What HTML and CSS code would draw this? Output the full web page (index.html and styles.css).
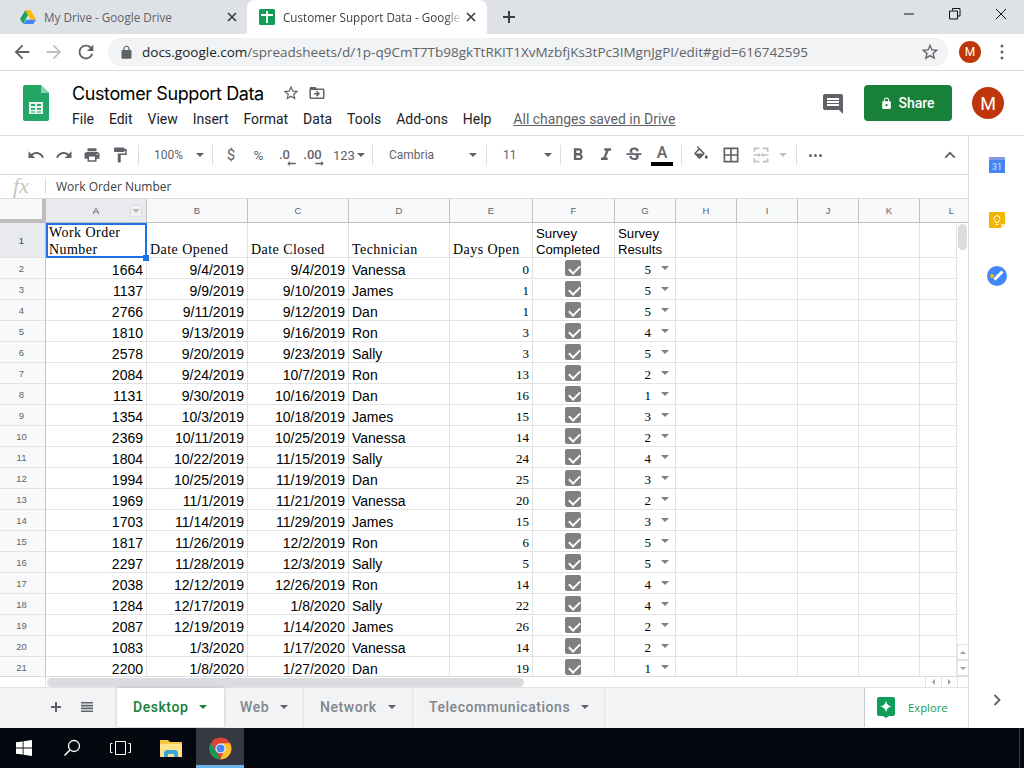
FILE: index.html
```html
<!DOCTYPE html>
<html lang="en">
<head>
<meta charset="utf-8">
<title>Customer Support Data</title>
<link rel="stylesheet" href="styles.css">
</head>
<body>
<div class="tabstrip">
  <div class="tab">
    <svg class="favicon" viewBox="0 0 24 24"><path fill="#fbbc04" d="M8 2h8l8 14h-8z"/><path fill="#1ea362" d="M8 2l4 7-7.500 13L0 15z"/><path fill="#4285f4" d="M9 16h15l-4 6.500H4.800z"/></svg>
    <span class="tab-title">My Drive - Google Drive</span>
    <svg class="tab-x" viewBox="0 0 10 10"><path d="M1 1l8 8M9 1L1 9" stroke="#3c4043" stroke-width="1.700" fill="none"/></svg>
  </div>
  <div class="tab active">
    <svg class="favicon" viewBox="0 0 16 16"><rect width="16" height="16" rx="1.500" fill="#0f9d58"/><path fill="#fff" d="M7 2h2v3h5v2H9v7H7V7H2V5h5z"/></svg>
    <span class="tab-title">Customer Support Data - Google</span>
    <svg class="tab-x" viewBox="0 0 10 10"><path d="M1 1l8 8M9 1L1 9" stroke="#3c4043" stroke-width="1.700" fill="none"/></svg>
  </div>
  <svg class="newtab" viewBox="0 0 14 14"><path d="M6 1h2v5h5v2H8v5H6V8H1V6h5z" fill="#3c4043"/></svg>
  <div class="winctl">
    <svg viewBox="0 0 12 12" width="12" height="12"><path d="M1 6h10" stroke="#111" fill="none"/></svg>
    <svg viewBox="0 0 12 12" width="12" height="12"><path d="M3.500 2.500V.5h7.500v7.500H9M.5 3h8v8h-8z" stroke="#111" fill="none"/></svg>
    <svg viewBox="0 0 12 12" width="12" height="12"><path d="M1 1l10 10M11 1L1 11" stroke="#111" fill="none"/></svg>
  </div>
</div>
<div class="addrbar">
  <svg class="nav" viewBox="0 0 24 24"><path fill="#5f6368" d="M20 11H7.830l5.590-5.590L12 4l-8 8 8 8 1.410-1.410L7.830 13H20v-2z"/></svg>
  <svg class="nav" viewBox="0 0 24 24"><path fill="#bdc1c6" d="M12 4l-1.410 1.410L16.170 11H4v2h12.170l-5.580 5.590L12 20l8-8z"/></svg>
  <svg class="nav" viewBox="0 0 24 24"><path fill="#5f6368" d="M17.650 6.350C16.200 4.900 14.210 4 12 4c-4.420 0-7.990 3.580-7.990 8s3.570 8 7.990 8c3.730 0 6.840-2.550 7.730-6h-2.080c-.82 2.330-3.040 4-5.650 4-3.310 0-6-2.690-6-6s2.690-6 6-6c1.660 0 3.140.69 4.220 1.780L13 11h7V4l-2.350 2.350z"/></svg>
  <div class="omnibox">
    <svg class="omni-lock" viewBox="0 0 24 24"><path fill="#5f6368" d="M18 8h-1V6c0-2.760-2.240-5-5-5S7 3.240 7 6v2H6c-1.100 0-2 .9-2 2v10c0 1.100.9 2 2 2h12c1.100 0 2-.9 2-2V10c0-1.100-.9-2-2-2zM15.100 8H8.900V6c0-1.710 1.390-3.100 3.100-3.100 1.710 0 3.100 1.390 3.100 3.100v2z"/></svg>
    <span class="url"><b>docs.google.com</b>/spreadsheets/d/1p-q9CmT7Tb98gkTtRKIT1XvMzbfjKs3tPc3IMgnJgPI/edit#gid=616742595</span>
    <svg class="omni-star" viewBox="0 0 24 24"><path fill="#5f6368" d="M22 9.240l-7.190-.62L12 2 9.190 8.630 2 9.240l5.460 4.730L5.820 21 12 17.270 18.180 21l-1.630-7.030L22 9.240zM12 15.400l-3.760 2.270 1-4.280-3.320-2.880 4.380-.38L12 6.100l1.710 4.040 4.380.38-3.320 2.880 1 4.280L12 15.400z"/></svg>
  </div>
  <div class="avatar small">M</div>
  <svg class="kebab" viewBox="0 0 4 16"><circle cx="2" cy="2" r="1.500"/><circle cx="2" cy="8" r="1.500"/><circle cx="2" cy="14" r="1.500"/></svg>
</div>
<div class="dochead">
  <svg class="sheets-logo" viewBox="0 0 26 36"><path fill="#23a566" d="M2 0h16l8 8v26a2 2 0 0 1-2 2H2a2 2 0 0 1-2-2V2a2 2 0 0 1 2-2z"/><path fill="#8ed1b1" d="M18 0l8 8h-8z"/><path fill="#e8f5ee" d="M6 17h14v12H6zm2 2v2h4v-2zm6 0v2h4v-2zm-6 4v1.800h4V23zm6 0v1.800h4V23zm-6 3.500v1h4v-1zm6 0v1h4v-1z" fill-rule="evenodd"/></svg>
  <div class="titles">
    <div class="title-row">
      <span class="doc-title">Customer Support Data</span>
      <svg class="star" viewBox="0 0 24 24"><path fill="#5f6368" d="M22 9.240l-7.190-.62L12 2 9.190 8.630 2 9.240l5.460 4.730L5.820 21 12 17.270 18.180 21l-1.630-7.030L22 9.240zM12 15.400l-3.760 2.270 1-4.280-3.320-2.880 4.380-.38L12 6.100l1.710 4.040 4.380.38-3.320 2.880 1 4.280L12 15.400z"/></svg>
      <svg class="move" viewBox="0 0 24 24"><path fill="#5f6368" d="M20 6h-8l-2-2H4c-1.100 0-2 .9-2 2v12c0 1.100.9 2 2 2h16c1.100 0 2-.9 2-2V8c0-1.100-.9-2-2-2zm0 12H4V8h16v10zm-8.010-9l-1.410 1.410L12.160 12H8v2h4.160l-1.590 1.590L11.990 17 16 13.010 11.990 9z"/></svg>
    </div>
    <div class="menu">
      <span>File</span><span>Edit</span><span>View</span><span>Insert</span><span>Format</span><span>Data</span><span>Tools</span><span>Add-ons</span><span>Help</span><a class="saved">All changes saved in Drive</a>
    </div>
  </div>
  <svg class="comment" viewBox="2 2 20 20"><path fill="#5f6368" d="M21.990 4c0-1.100-.89-2-1.990-2H4c-1.100 0-2 .9-2 2v12c0 1.100.9 2 2 2h14l4 4-.01-18zM18 14H6v-2h12v2zm0-3H6V9h12v2zm0-3H6V6h12v2z"/></svg>
  <div class="share">
    <svg viewBox="0 0 24 24"><path fill="#fff" d="M18 8h-1V6c0-2.760-2.240-5-5-5S7 3.240 7 6v2H6c-1.100 0-2 .9-2 2v10c0 1.100.9 2 2 2h12c1.100 0 2-.9 2-2V10c0-1.100-.9-2-2-2zm-6 9c-1.100 0-2-.9-2-2s.9-2 2-2 2 .9 2 2-.9 2-2 2zm3.100-9H8.900V6c0-1.710 1.390-3.100 3.100-3.100 1.710 0 3.100 1.390 3.100 3.100v2z"/></svg>
    <span>Share</span>
  </div>
  <div class="avatar big">M</div>
</div>
<div class="workspace">
  <div class="mainpane">
    <div class="toolbar">
      <div class="b"><svg viewBox="0 0 24 24"><path d="M12.500 8c-2.650 0-5.050.99-6.900 2.600L2 7v9h9l-3.620-3.620c1.390-1.160 3.160-1.880 5.120-1.880 3.540 0 6.550 2.310 7.600 5.500l2.370-.78C21.080 11.030 17.150 8 12.500 8z"/></svg></div>
      <div class="b"><svg viewBox="0 0 24 24"><path d="M18.400 10.600C16.550 8.990 14.150 8 11.500 8c-4.650 0-8.580 3.030-9.960 7.220L3.900 16c1.050-3.190 4.050-5.500 7.600-5.500 1.950 0 3.730.72 5.120 1.880L13 16h9V7l-3.600 3.600z"/></svg></div>
      <div class="b"><svg viewBox="0 0 24 24"><path d="M19 8H5c-1.660 0-3 1.340-3 3v6h4v4h12v-4h4v-6c0-1.660-1.340-3-3-3zm-3 11H8v-5h8v5zm3-7c-.55 0-1-.45-1-1s.45-1 1-1 1 .45 1 1-.45 1-1 1zm-1-9H6v4h12V3z"/></svg></div>
      <div class="b"><svg viewBox="0 0 24 24"><path d="M18 4V3c0-.55-.45-1-1-1H5c-.55 0-1 .45-1 1v4c0 .55.45 1 1 1h12c.55 0 1-.45 1-1V6h1v4H9v11c0 .55.45 1 1 1h2c.55 0 1-.45 1-1v-9h8V4h-3z"/></svg></div>
      <div class="sep s-a"></div>
      <div class="sel w-zoom"><span>100%</span><i class="caret"></i></div>
      <div class="sep"></div>
      <div class="b t t-money">$</div>
      <div class="b t t-pct">%</div>
      <div class="b dec"><span>.0</span><svg viewBox="0 0 10 6"><path d="M0 3l3-3v2h7v2H3v2z"/></svg></div>
      <div class="b dec"><span>.00</span><svg viewBox="0 0 10 6"><path d="M10 3L7 0v2H0v2h7v2z"/></svg></div>
      <div class="sel w-num"><span>123</span><i class="caret"></i></div>
      <div class="sep"></div>
      <div class="sel w-font"><span>Cambria</span><i class="caret"></i></div>
      <div class="sep"></div>
      <div class="sel w-size"><span>11</span><i class="caret"></i></div>
      <div class="sep s-b"></div>
      <div class="b big"><svg viewBox="0 0 24 24"><path d="M15.600 10.790c.97-.67 1.650-1.770 1.650-2.790 0-2.260-1.750-4-4-4H7v14h7.040c2.090 0 3.710-1.700 3.710-3.790 0-1.520-.86-2.820-2.150-3.420zM10 6.500h3c.83 0 1.500.67 1.500 1.500s-.67 1.500-1.500 1.500h-3v-3zm3.500 9H10v-3h3.500c.83 0 1.500.67 1.500 1.500s-.67 1.500-1.500 1.500z"/></svg></div>
      <div class="b big"><svg viewBox="0 0 24 24"><path d="M10 4v3h2.210l-3.420 8H6v3h8v-3h-2.210l3.420-8H18V4z"/></svg></div>
      <div class="b big"><svg viewBox="0 0 24 24"><path d="M6.850 7.080C6.850 4.370 9.450 3 12.240 3c1.640 0 3 .49 3.900 1.280.77.65 1.460 1.730 1.460 3.240h-3.010c0-.31-.05-.59-.15-.85-.29-.86-1.200-1.280-2.350-1.280-2.040 0-2.400 1.420-2.400 2.050 0 .74.41 1.350 1.210 1.870H6.850V7.080zM21 12v-2H3v2h9.620c1.150.45 1.960.75 1.960 1.970 0 1-.81 1.670-2.280 1.670-1.540 0-2.930-.54-2.930-2.510H6.400c0 .55.08 1.130.24 1.580.81 2.290 3.290 3.300 5.670 3.300 2.270 0 5.300-.89 5.300-4.050 0-.3-.01-1.160-.48-1.940H21V12z"/></svg></div>
      <div class="b color"><span>A</span><i></i></div>
      <div class="sep s-c"></div>
      <div class="b"><svg viewBox="0 0 24 24"><path d="M16.560 8.940L7.620 0 6.210 1.410l2.380 2.380-5.150 5.150c-.59.59-.59 1.540 0 2.120l5.500 5.500c.29.29.68.44 1.060.44s.77-.15 1.060-.44l5.500-5.500c.59-.58.59-1.530 0-2.120zM5.210 10L10 5.210 14.790 10H5.210zM19 11.500s-2 2.170-2 3.500c0 1.100.9 2 2 2s2-.9 2-2c0-1.330-2-3.500-2-3.500z"/></svg></div>
      <div class="b gap2 big"><svg viewBox="0 0 24 24"><path d="M3 3v18h18V3H3zm8 16H5v-6h6v6zm0-8H5V5h6v6zm8 8h-6v-6h6v6zm0-8h-6V5h6v6z"/></svg></div>
      <div class="b gap2 dim big"><svg viewBox="0 0 24 24"><path d="M3 3h7v2H5v3H3zm11 0h7v5h-2V5h-5zM3 16h2v3h5v2H3zm16 0h2v5h-7v-2h5zM3 11h6V9l3 3-3 3v-2H3zm18 0h-6V9l-3 3 3 3v-2h6z"/></svg></div>
      <i class="caret dimc"></i>
      <div class="sep s-d"></div>
      <div class="b more"><i></i><i></i><i></i></div>
      <svg class="collapse" viewBox="0 0 14 9"><path d="M1.500 7.500L7 2l5.500 5.500" fill="none" stroke="#5f6368" stroke-width="2.200"/></svg>
    </div>
    <div class="formula">
      <span class="fx">fx</span>
      <span class="fdiv"></span>
      <span class="ftext">Work Order Number</span>
    </div>
    <div class="gridwrap">
      <div class="grid">
        <div class="corner"></div>
        <div class="ch on">A<i class="filter"></i></div><div class="ch">B</div><div class="ch">C</div><div class="ch">D</div><div class="ch">E</div><div class="ch">F</div><div class="ch">G</div><div class="ch">H</div><div class="ch">I</div><div class="ch">J</div><div class="ch">K</div><div class="ch ch-l">L</div><div class="chend"></div>

        <div class="rh on">1</div>
        <div class="c hd sel-cell">Work Order Number<i class="handle"></i></div><div class="c hd">Date Opened</div><div class="c hd">Date Closed</div><div class="c hd">Technician</div><div class="c hd">Days Open</div><div class="c hs">Survey Completed</div><div class="c hs">Survey Results</div><div class="c"></div><div class="c"></div><div class="c"></div><div class="c"></div><div class="c"></div><div class="vs"></div>

        <div class="rh">2</div><div class="c r">1664</div><div class="c r">9/4/2019</div><div class="c r">9/4/2019</div><div class="c">Vanessa</div><div class="c r s">0</div><div class="c m"><i class="ck"></i></div><div class="c g">5<i class="dd"></i></div><div class="c"></div><div class="c"></div><div class="c"></div><div class="c"></div><div class="c"></div><div class="vs"></div>
        <div class="rh">3</div><div class="c r">1137</div><div class="c r">9/9/2019</div><div class="c r">9/10/2019</div><div class="c">James</div><div class="c r s">1</div><div class="c m"><i class="ck"></i></div><div class="c g">5<i class="dd"></i></div><div class="c"></div><div class="c"></div><div class="c"></div><div class="c"></div><div class="c"></div><div class="vs"></div>
        <div class="rh">4</div><div class="c r">2766</div><div class="c r">9/11/2019</div><div class="c r">9/12/2019</div><div class="c">Dan</div><div class="c r s">1</div><div class="c m"><i class="ck"></i></div><div class="c g">5<i class="dd"></i></div><div class="c"></div><div class="c"></div><div class="c"></div><div class="c"></div><div class="c"></div><div class="vs"></div>
        <div class="rh">5</div><div class="c r">1810</div><div class="c r">9/13/2019</div><div class="c r">9/16/2019</div><div class="c">Ron</div><div class="c r s">3</div><div class="c m"><i class="ck"></i></div><div class="c g">4<i class="dd"></i></div><div class="c"></div><div class="c"></div><div class="c"></div><div class="c"></div><div class="c"></div><div class="vs"></div>
        <div class="rh">6</div><div class="c r">2578</div><div class="c r">9/20/2019</div><div class="c r">9/23/2019</div><div class="c">Sally</div><div class="c r s">3</div><div class="c m"><i class="ck"></i></div><div class="c g">5<i class="dd"></i></div><div class="c"></div><div class="c"></div><div class="c"></div><div class="c"></div><div class="c"></div><div class="vs"></div>
        <div class="rh">7</div><div class="c r">2084</div><div class="c r">9/24/2019</div><div class="c r">10/7/2019</div><div class="c">Ron</div><div class="c r s">13</div><div class="c m"><i class="ck"></i></div><div class="c g">2<i class="dd"></i></div><div class="c"></div><div class="c"></div><div class="c"></div><div class="c"></div><div class="c"></div><div class="vs"></div>
        <div class="rh">8</div><div class="c r">1131</div><div class="c r">9/30/2019</div><div class="c r">10/16/2019</div><div class="c">Dan</div><div class="c r s">16</div><div class="c m"><i class="ck"></i></div><div class="c g">1<i class="dd"></i></div><div class="c"></div><div class="c"></div><div class="c"></div><div class="c"></div><div class="c"></div><div class="vs"></div>
        <div class="rh">9</div><div class="c r">1354</div><div class="c r">10/3/2019</div><div class="c r">10/18/2019</div><div class="c">James</div><div class="c r s">15</div><div class="c m"><i class="ck"></i></div><div class="c g">3<i class="dd"></i></div><div class="c"></div><div class="c"></div><div class="c"></div><div class="c"></div><div class="c"></div><div class="vs"></div>
        <div class="rh">10</div><div class="c r">2369</div><div class="c r">10/11/2019</div><div class="c r">10/25/2019</div><div class="c">Vanessa</div><div class="c r s">14</div><div class="c m"><i class="ck"></i></div><div class="c g">2<i class="dd"></i></div><div class="c"></div><div class="c"></div><div class="c"></div><div class="c"></div><div class="c"></div><div class="vs"></div>
        <div class="rh">11</div><div class="c r">1804</div><div class="c r">10/22/2019</div><div class="c r">11/15/2019</div><div class="c">Sally</div><div class="c r s">24</div><div class="c m"><i class="ck"></i></div><div class="c g">4<i class="dd"></i></div><div class="c"></div><div class="c"></div><div class="c"></div><div class="c"></div><div class="c"></div><div class="vs"></div>
        <div class="rh">12</div><div class="c r">1994</div><div class="c r">10/25/2019</div><div class="c r">11/19/2019</div><div class="c">Dan</div><div class="c r s">25</div><div class="c m"><i class="ck"></i></div><div class="c g">3<i class="dd"></i></div><div class="c"></div><div class="c"></div><div class="c"></div><div class="c"></div><div class="c"></div><div class="vs"></div>
        <div class="rh">13</div><div class="c r">1969</div><div class="c r">11/1/2019</div><div class="c r">11/21/2019</div><div class="c">Vanessa</div><div class="c r s">20</div><div class="c m"><i class="ck"></i></div><div class="c g">2<i class="dd"></i></div><div class="c"></div><div class="c"></div><div class="c"></div><div class="c"></div><div class="c"></div><div class="vs"></div>
        <div class="rh">14</div><div class="c r">1703</div><div class="c r">11/14/2019</div><div class="c r">11/29/2019</div><div class="c">James</div><div class="c r s">15</div><div class="c m"><i class="ck"></i></div><div class="c g">3<i class="dd"></i></div><div class="c"></div><div class="c"></div><div class="c"></div><div class="c"></div><div class="c"></div><div class="vs"></div>
        <div class="rh">15</div><div class="c r">1817</div><div class="c r">11/26/2019</div><div class="c r">12/2/2019</div><div class="c">Ron</div><div class="c r s">6</div><div class="c m"><i class="ck"></i></div><div class="c g">5<i class="dd"></i></div><div class="c"></div><div class="c"></div><div class="c"></div><div class="c"></div><div class="c"></div><div class="vs"></div>
        <div class="rh">16</div><div class="c r">2297</div><div class="c r">11/28/2019</div><div class="c r">12/3/2019</div><div class="c">Sally</div><div class="c r s">5</div><div class="c m"><i class="ck"></i></div><div class="c g">5<i class="dd"></i></div><div class="c"></div><div class="c"></div><div class="c"></div><div class="c"></div><div class="c"></div><div class="vs"></div>
        <div class="rh">17</div><div class="c r">2038</div><div class="c r">12/12/2019</div><div class="c r">12/26/2019</div><div class="c">Ron</div><div class="c r s">14</div><div class="c m"><i class="ck"></i></div><div class="c g">4<i class="dd"></i></div><div class="c"></div><div class="c"></div><div class="c"></div><div class="c"></div><div class="c"></div><div class="vs"></div>
        <div class="rh">18</div><div class="c r">1284</div><div class="c r">12/17/2019</div><div class="c r">1/8/2020</div><div class="c">Sally</div><div class="c r s">22</div><div class="c m"><i class="ck"></i></div><div class="c g">4<i class="dd"></i></div><div class="c"></div><div class="c"></div><div class="c"></div><div class="c"></div><div class="c"></div><div class="vs"></div>
        <div class="rh">19</div><div class="c r">2087</div><div class="c r">12/19/2019</div><div class="c r">1/14/2020</div><div class="c">James</div><div class="c r s">26</div><div class="c m"><i class="ck"></i></div><div class="c g">2<i class="dd"></i></div><div class="c"></div><div class="c"></div><div class="c"></div><div class="c"></div><div class="c"></div><div class="vs"></div>
        <div class="rh">20</div><div class="c r">1083</div><div class="c r">1/3/2020</div><div class="c r">1/17/2020</div><div class="c">Vanessa</div><div class="c r s">14</div><div class="c m"><i class="ck"></i></div><div class="c g">2<i class="dd"></i></div><div class="c"></div><div class="c"></div><div class="c"></div><div class="c"></div><div class="c"></div><div class="vs"></div>
        <div class="rh">21</div><div class="c r">2200</div><div class="c r">1/8/2020</div><div class="c r">1/27/2020</div><div class="c">Dan</div><div class="c r s">19</div><div class="c m"><i class="ck"></i></div><div class="c g">1<i class="dd"></i></div><div class="c"></div><div class="c"></div><div class="c"></div><div class="c"></div><div class="c"></div><div class="vs"></div>
      </div>
      <div class="vthumb"></div>
      <div class="varrows"><div class="va"><i class="up"></i></div><div class="va"><i class="down"></i></div></div>
    </div>
    <div class="hscroll">
      <div class="hgutter"></div>
      <div class="htrack"><div class="hthumb"></div></div>
      <div class="ha"><i class="left"></i></div>
      <div class="ha"><i class="right"></i></div>
      <div class="hend"></div>
    </div>
    <div class="sheetbar">
      <svg class="add" viewBox="0 0 12 12"><path d="M5 1h2v4h4v2H7v4H5V7H1V5h4z" fill="#5f6368"/></svg>
      <svg class="all" viewBox="0 0 14 12"><path d="M1 1h12v1.600H1zm0 2.800h12v1.600H1zm0 2.800h12v1.600H1zm0 2.800h12V11H1z" fill="#5f6368"/></svg>
      <div class="stab on">Desktop<i class="caret"></i></div>
      <div class="stab w-web">Web<i class="caret"></i></div>
      <div class="stab w-net">Network<i class="caret"></i></div>
      <div class="stab w-tel">Telecommunications<i class="caret"></i></div>
      <div class="explore">
        <svg viewBox="0 0 18 21"><path fill="#0f9d58" d="M2 0h14a2 2 0 0 1 2 2v15a2 2 0 0 1-2 2h-4l-3 2-3-2H2a2 2 0 0 1-2-2V2a2 2 0 0 1 2-2z"/><path fill="#fff" d="M9 3.500c.5 3.500 2 5 5.500 6-3.500 1-5 2.500-5.500 6-.5-3.500-2-5-5.500-6 3.500-1 5-2.500 5.500-6z"/></svg>
        <span>Explore</span>
      </div>
    </div>
  </div>
  <div class="sidepanel">
    <svg class="app cal" viewBox="0 0 16 16"><path fill="#4285f4" d="M0 3h16v13H0z"/><path fill="#2a56c6" d="M0 0h16v3H0z" opacity=".6"/><text x="8" y="12.500" font-size="9" text-anchor="middle" fill="#cfe0fc" font-family="Roboto, sans-serif">31</text></svg>
    <svg class="app keep" viewBox="0 0 16 16"><path fill="#f4b400" d="M1 0h14a1 1 0 0 1 1 1v11l-4 4H1a1 1 0 0 1-1-1V1a1 1 0 0 1 1-1z"/><path fill="#fbe6a2" d="M16 12l-4 4v-4z"/><path fill="none" stroke="#fff" d="M6.500 10.500V9.200C5.500 8.600 5 7.700 5 6.700a3 3 0 0 1 6 0c0 1-.5 1.900-1.500 2.500v1.300zM6.500 12.500h3"/></svg>
    <svg class="app tasks" viewBox="0 0 20 20"><circle cx="10" cy="10" r="10" fill="#4285f4"/><path d="M7.500 13.500l8-8" stroke="#fff" stroke-width="3" fill="none"/><circle cx="5" cy="10" r="2" fill="#fbbc04"/></svg>
    <svg class="sidechev" viewBox="0 0 8 12"><path d="M1.500 1l5 5-5 5" fill="none" stroke="#5f6368" stroke-width="1.800"/></svg>
  </div>
</div>
<div class="taskbar">
  <svg class="win" viewBox="0 0 16 16"><path fill="#fff" d="M0 2.300l6.700-.9v6.200H0zM7.500 1.300L16 0v7.600H7.500zM0 8.400h6.700v6.200L0 13.700zM7.500 8.400H16V16l-8.500-1.200z"/></svg>
  <svg class="search" viewBox="0 0 18 18"><circle cx="11" cy="7" r="5.500" fill="none" stroke="#fff" stroke-width="1.300"/><path d="M7 11l-5.500 5.500" stroke="#fff" stroke-width="1.600"/></svg>
  <svg class="taskview" viewBox="0 0 21 14"><path fill="none" stroke="#fff" d="M5.500.5h10v13h-10zM2.500 2.500H.5v9h2M18.500 2.500h2v9h-2"/></svg>
  <svg class="folder" viewBox="0 0 22 18"><path fill="#f5c842" d="M0 1h8l2 2h12v15H0z"/><path fill="#ffe48a" d="M0 5h22v13H0z"/><path fill="#3aa6dd" d="M4 18v-5l2-2h10l2 2v5h-4v-3H8v3z"/></svg>
  <div class="chrome-tile">
    <svg viewBox="0 0 24 24"><circle cx="12" cy="12" r="11.500" fill="#db4437"/><path fill="#0f9d58" d="M12 23.500A11.500 11.500 0 0 1 2 6.300l6 10.500 4 6.700z"/><path fill="#fbc02d" d="M12 23.500A11.500 11.500 0 0 0 22 6.500H12l4 6.500z"/><circle cx="12" cy="12" r="5.300" fill="#fff"/><circle cx="12" cy="12" r="4.200" fill="#4285f4"/></svg>
  </div>
  <div class="showdesk"></div>
</div>
</body>
</html>
```
FILE: styles.css
```css
* { box-sizing: border-box; }
html, body { margin: 0; padding: 0; }
body {
  width: 1024px; height: 768px; overflow: hidden;
  display: flex; flex-direction: column;
  font-family: Roboto, "Liberation Sans", sans-serif;
  background: #fff; color: #000;
}
i { display: block; font-style: normal; }
svg { display: block; flex: none; }

/* Browser chrome */
.tabstrip { height: 34px; flex: none; background: #dee1e6; display: flex; align-items: stretch; position: relative; }
.tab { width: 247px; display: flex; align-items: center; padding-left: 20px; font: 11.700px "Open Sans", sans-serif; color: #5f6368; }
.tab.active { width: 240px; background: #fff; border-radius: 8px 8px 0 0; padding-left: 12px; color: #3c4043; }
.favicon { width: 16px; height: 16px; margin-right: 8px; }
.tab-title { flex: 1; overflow: hidden; white-space: nowrap; }
.tab.active .tab-title { -webkit-mask-image: linear-gradient(90deg, #000 90%, transparent 99%); mask-image: linear-gradient(90deg, #000 90%, transparent 99%); }
.tab-x { width: 10px; height: 10px; margin-right: 10px; margin-left: 2px; }
.tab.active .tab-x { margin-right: 11px; }
.newtab { width: 14px; height: 14px; margin: 10px 0 0 15px; }
.winctl { margin-left: auto; display: flex; align-items: center; height: 28px; gap: 34px; padding-right: 17px; }
.addrbar { height: 37px; flex: none; display: flex; align-items: center; border-bottom: 1px solid #dadce0; position: relative; padding-left: 11px; }
.nav { width: 22px; height: 22px; margin-right: 10px; }
.omnibox { width: 840px; height: 28px; margin-left: 1px; background: #f1f3f4; border-radius: 14px; display: flex; align-items: center; padding-left: 11px; }
.omni-lock { width: 15px; height: 15px; }
.url { font: 13.500px "Open Sans", sans-serif; color: #5f6368; margin-left: 8px; white-space: nowrap; }
.url b { font-weight: 400; color: #202124; }
.omni-star { width: 20px; height: 20px; margin-left: auto; margin-right: 8px; }
.avatar { background: #bf360c; color: #fff; border-radius: 50%; display: flex; align-items: center; justify-content: center; flex: none; }
.avatar.small { width: 22px; height: 22px; font: 12px Roboto, sans-serif; margin-left: 11px; }
.kebab { width: 4px; height: 16px; margin-left: 19px; fill: #5f6368; }

/* Doc header */
.dochead { height: 65px; flex: none; display: flex; align-items: flex-start; border-bottom: 1px solid #dadce0; position: relative; padding-left: 23px; }
.sheets-logo { width: 26px; height: 36px; margin-top: 14px; }
.titles { margin-left: 23px; }
.title-row { display: flex; align-items: center; height: 24px; margin-top: 10px; }
.doc-title { font: 18px Inter, Roboto, sans-serif; color: #000; letter-spacing: -.4px; }
.star { width: 18px; height: 18px; margin-left: 18px; }
.move { width: 18px; height: 18px; margin-left: 8px; }
.menu { display: flex; font: 14px Roboto, sans-serif; color: #202124; margin-top: 4px; height: 20px; align-items: center; }
.menu span { margin-right: 14.900px; }
.saved { color: #5f6368; text-decoration: underline; margin-left: 7px; }
.comment { width: 20px; height: 20px; margin: 23px 0 0 auto; }
.share { width: 88px; height: 36px; margin: 14px 0 0 21px; background: #188038; border-radius: 4px; color: #fff; display: flex; align-items: center; justify-content: center; font: 500 14px Roboto, sans-serif; gap: 5px; padding-right: 1px; }
.share svg { width: 13px; height: 13px; }
.avatar.big { width: 32px; height: 32px; margin: 16px 20px 0 20px; font: 18px Roboto, sans-serif; }

/* Workspace */
.workspace { height: 592px; flex: none; display: flex; }
.mainpane { width: 969px; border-right: 1px solid #dadce0; display: flex; flex-direction: column; flex: none; }
.sidepanel { flex: 1; position: relative; display: flex; flex-direction: column; align-items: center; }
.app { width: 16px; height: 16px; }
.cal { margin-top: 21px; }
.keep { margin-top: 39px; }
.tasks { margin-top: 38px; width: 20px; height: 20px; }
.sidechev { width: 8px; height: 12px; margin-top: 408px; }

/* Toolbar */
.toolbar { height: 39px; flex: none; display: flex; align-items: center; padding-left: 22px; border-bottom: 1px solid #dadce0; color: #5f6368; }
.b { width: 28px; height: 28px; display: flex; flex-direction: column; align-items: center; justify-content: center; flex: none; }
.b svg { width: 18px; height: 18px; fill: #5f6368; }
.b.big svg { width: 20px; height: 20px; }
.b.dim svg { fill: #bdc1c6; }
.gap2 { margin-left: 2px; }
.sep { width: 1px; height: 20px; background: #dadce0; flex: none; }
.s-a { margin-left: 4px; }
.s-b { margin-right: 3px; }
.s-c { margin: 0 5px; }
.s-d { margin: 0 4px 0 9px; }
.sel { display: flex; align-items: center; height: 28px; font-size: 12px; position: relative; color: #5f6368; flex: none; }
.sel span { font-size: 12px; }
.caret { width: 0; height: 0; border: 4px solid transparent; border-top: 4.500px solid #5f6368; border-bottom: 0; flex: none; }
.w-zoom { width: 73px; padding-left: 15px; }
.w-zoom .caret { margin-left: 13px; }
.w-num { width: 44px; padding-left: 5px; }
.w-num span { font-size: 13px; }
.w-num .caret { margin-left: 2px; }
.w-font { width: 113px; padding-left: 16px; }
.w-font .caret { margin-left: auto; margin-right: 9px; }
.w-size { width: 73px; padding-left: 16px; }
.w-size .caret { margin-left: auto; margin-right: 8px; }
.t-money { margin-left: 4px; font-size: 15px; }
.t-pct { width: 27px; font-size: 13.500px; }
.dec { font-size: 13px; font-weight: 500; padding-top: 4px; }
.dec span { line-height: 12px; margin-right: 3px; }
.b.dec svg { width: 9px; height: 5px; margin-left: 10px; }
.color span { font-size: 16px; font-weight: 500; line-height: 15px; }
.color i { width: 22px; height: 4px; background: #000; margin-top: 2px; }
.dimc { border-top-color: #bdc1c6; margin-left: 4px; }
.more { flex-direction: row; gap: 2px; }
.more i { width: 3px; height: 3px; border-radius: 50%; background: #5f6368; }
.collapse { width: 12px; height: 8px; margin-left: auto; margin-right: 12px; }

/* Formula */
.formula { height: 24px; flex: none; display: flex; align-items: center; border-bottom: 1px solid #dadce0; padding-bottom: 1px; }
.fx { width: 45px; padding-left: 13px; font: italic 22px "Liberation Serif", serif; color: #c4c4c4; }
.fdiv { width: 1px; height: 16px; background: #dadce0; }
.ftext { margin-left: 10px; font: 12px "Open Sans", Roboto, sans-serif; color: #3c4043; }

/* Grid */
.gridwrap { height: 477px; flex: none; position: relative; overflow: hidden; }
.grid {
  display: grid;
  grid-template-columns: 46px 101px 101px 101px 101px 83px 82px 61px 61px 61px 61px 61px 37px 11px;
  grid-template-rows: 24px 35px repeat(20, 21px);
}
.corner { background: #f8f9fa; border-right: 4px solid #bdbdbd; border-bottom: 4px solid #bdbdbd; }
.ch { background: #f8f9fa; border-right: 1px solid #c0c0c0; border-bottom: 1px solid #c0c0c0; display: flex; align-items: center; justify-content: center; font: 9.500px "Liberation Sans", Arial, sans-serif; color: #5f6368; position: relative; }
.ch.on { background: #e8eaed; color: #444; }
.ch-l { border-right: 0; padding-left: 26px; }
.chend { background: #f8f9fa; border-bottom: 1px solid #c0c0c0; }
.filter { position: absolute; right: 4px; top: 6px; width: 12px; height: 12px; background: #f1f3f4; border: 1px solid #dadce0; }
.filter::after { content: ""; display: block; margin: 3px auto 0; width: 0; height: 0; border: 4px solid transparent; border-top: 4px solid #bbb; border-bottom: 0; }
.rh { background: #f8f9fa; border-right: 1px solid #c0c0c0; border-bottom: 1px solid #e2e3e3; display: flex; align-items: center; justify-content: center; font: 9.500px "Liberation Sans", Arial, sans-serif; color: #5f6368; padding-right: 2px; }
.rh.on { background: #e8eaed; color: #444; }
.c { border-right: 1px solid #e2e3e3; border-bottom: 1px solid #e2e3e3; font: 14px "Liberation Sans", Arial, sans-serif; color: #000; padding: 0 3px; display: flex; align-items: flex-end; white-space: nowrap; line-height: 16px; position: relative; }
.r { justify-content: flex-end; }
.s { font: 13px "Liberation Serif", serif; line-height: 16px; }
.hd { font: 14px "Liberation Serif", serif; letter-spacing: .45px; white-space: normal; line-height: 17px; border-bottom: 0; box-shadow: inset 0 -1px 0 #e2e3e3; }
.hs { white-space: normal; line-height: 16px; font-size: 13.200px; border-bottom: 0; box-shadow: inset 0 -1px 0 #e2e3e3; }
.m { justify-content: center; align-items: flex-start; padding-top: 2px; padding-right: 4px; }
.g { font: 13px "Liberation Serif", serif; justify-content: flex-end; padding-right: 24px; line-height: 16px; }
.ck { width: 16px; height: 16px; background: #808080; border-radius: 2px; position: relative; }
.ck::after { content: ""; position: absolute; left: 5.500px; top: 2.500px; width: 5px; height: 9px; border: solid #fff; border-width: 0 2px 2px 0; transform: rotate(45deg); }
.dd { position: absolute; right: 6px; top: 8px; width: 0; height: 0; border: 4.500px solid transparent; border-top: 4px solid #808080; border-bottom: 0; }
.sel-cell { outline: 2px solid #1a73e8; outline-offset: -2px; z-index: 2; padding-left: 3px; }
.handle { position: absolute; right: -3px; bottom: -3px; width: 6px; height: 6px; background: #1a73e8; }
.vs { background: #fff; }
.vthumb { position: absolute; left: 958px; top: 25px; width: 9px; height: 26px; background: #dadce0; border-radius: 5px; }
.varrows { position: absolute; left: 957px; bottom: 0; width: 11px; }
.va { height: 16px; border: 1px solid #e2e3e3; border-right: 0; display: flex; align-items: center; justify-content: center; background: #fff; }
.up { width: 0; height: 0; border: 3px solid transparent; border-bottom: 3px solid #9aa0a6; border-top: 0; }
.down { width: 0; height: 0; border: 3px solid transparent; border-top: 3px solid #9aa0a6; border-bottom: 0; }

/* Horizontal scroll */
.hscroll { height: 12px; flex: none; display: flex; border-top: 1px solid #dadce0; border-bottom: 1px solid #e2e3e3; }
.hgutter { width: 46px; border-right: 1px solid #e2e3e3; flex: none; }
.htrack { width: 879px; padding: 1px; flex: none; }
.hthumb { width: 477px; height: 9px; background: #dadce0; border-radius: 5px; }
.ha { width: 16px; border-left: 1px solid #e2e3e3; display: flex; align-items: center; justify-content: center; flex: none; }
.hend { flex: 1; border-left: 1px solid #e2e3e3; }
.left { width: 0; height: 0; border: 3px solid transparent; border-right: 3px solid #9aa0a6; border-left: 0; }
.right { width: 0; height: 0; border: 3px solid transparent; border-left: 3px solid #9aa0a6; border-right: 0; }

/* Sheet tabs */
.sheetbar { flex: 1; display: flex; background: #f1f3f4; align-items: stretch; position: relative; }
.add { width: 12px; height: 12px; margin: 13px 0 0 50px; }
.all { width: 14px; height: 12px; margin: 13px 0 0 18px; }
.stab { display: flex; align-items: center; font: 500 14px Roboto, sans-serif; color: #80868b; height: 40px; border-right: 1px solid #e3e5e7; padding-bottom: 2px; flex: none; letter-spacing: .55px; }
.stab .caret { margin-left: 11px; }
.stab.on { width: 107px; margin-left: 23px; background: #fff; color: #188038; padding-left: 16px; box-shadow: 0 0 3px rgba(60,64,67,.3); border-right: 0; height: 39px; padding-bottom: 1px; }
.stab.on .caret { border-top-color: #188038; }
.w-web { width: 79px; padding-left: 15px; margin-left: 1px; }
.w-net { width: 109px; padding-left: 16px; }
.w-tel { width: 192px; padding-left: 16px; }
.explore { margin-left: auto; width: 104px; background: #fff; border-left: 1px solid #c8cacc; display: flex; align-items: center; padding-left: 12px; font: 11.300px "Open Sans", sans-serif; color: #0f9d58; height: 39px; }
.explore svg { width: 18px; height: 21px; }
.explore span { margin-left: 13px; }

/* Taskbar */
.taskbar { flex: 1; background: #04070e; display: flex; align-items: center; position: relative; }
.win { width: 16px; height: 16px; margin-left: 16px; }
.search { width: 18px; height: 18px; margin-left: 31px; }
.taskview { width: 21px; height: 14px; margin-left: 29px; }
.folder { width: 22px; height: 18px; margin-left: 29px; }
.chrome-tile { width: 48px; height: 40px; margin-left: 14px; background: #36393f; border-bottom: 3px solid #6cb2eb; display: flex; align-items: center; justify-content: center; padding-top: 3px; }
.chrome-tile svg { width: 23px; height: 23px; }
.showdesk { width: 1px; height: 40px; background: #3a3d44; margin-left: auto; margin-right: 4px; }
```
